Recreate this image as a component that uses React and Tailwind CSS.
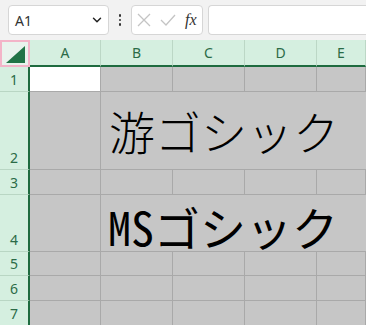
import React from 'react';
import { ChevronDown } from 'lucide-react';

const cols = [
  { id: 'A', w: 'w-[71px]' },
  { id: 'B', w: 'w-[72px]' },
  { id: 'C', w: 'w-[72px]' },
  { id: 'D', w: 'w-[72px]' },
  { id: 'E', w: 'flex-1' },
];

const rows = [
  { n: 1, h: 'h-[25px]' },
  { n: 2, h: 'h-[78px]', text: 'yu' },
  { n: 3, h: 'h-[25px]' },
  { n: 4, h: 'h-[57px]', text: 'ms' },
  { n: 5, h: 'h-[24px]' },
  { n: 6, h: 'h-[25px]' },
  { n: 7, h: 'h-[25px]' },
];

function RowHead({ n, h }) {
  return (
    <div className={`${h} w-[30px] shrink-0 bg-[#d5efe0] border-r-2 border-r-[#1e6b3f] border-b border-b-[#b9d6c4] flex items-end justify-center pb-[1px] text-[14px] leading-[20px] text-[#2b6b47]`}>
      {n}
    </div>
  );
}

function SpillText({ kind }) {
  if (kind === 'yu') {
    return (
      <div className="pl-[8px] pt-[12px] whitespace-nowrap text-[46px] leading-[52px] font-light text-black" style={{ fontFamily: '"Noto Sans CJK JP", sans-serif' }}>
        游ゴシック
      </div>
    );
  }
  return (
    <div className="pl-[7px] pt-[5px] whitespace-nowrap text-[46px] leading-[52px] font-medium text-black" style={{ fontFamily: '"Noto Sans Mono CJK JP", "Noto Sans CJK JP", monospace' }}>
      MSゴシック
    </div>
  );
}

export default function App() {
  return (
    <div className="w-[366px] h-[325px] overflow-hidden bg-[#c6c6c6]" style={{ fontFamily: '"Noto Sans", sans-serif' }}>
      {/* formula bar */}
      <div className="h-[40px] bg-[#f2f2f2] flex items-center pl-[8px]">
        <div className="w-[101px] h-[30px] bg-white border border-[#d6d6d6] rounded-[4px] flex items-center justify-between pl-[6px] pr-[4px]">
          <span className="text-[14px] text-[#333]">A1</span>
          <ChevronDown className="w-[14px] h-[14px] text-[#222]" strokeWidth={2.5} />
        </div>
        <div className="w-[22px] flex flex-col items-center gap-[2px]">
          <span className="w-[2.5px] h-[2.5px] bg-[#333] rounded-full" />
          <span className="w-[2.5px] h-[2.5px] bg-[#333] rounded-full" />
          <span className="w-[2.5px] h-[2.5px] bg-[#333] rounded-full" />
        </div>
        <div className="w-[72px] h-[30px] bg-white border border-[#d6d6d6] rounded-[4px] flex items-center pl-[5px] gap-[9px]">
          <svg width="14" height="14" viewBox="0 0 14 14" className="text-[#c4c4c4]">
            <path d="M1 1 L13 13 M13 1 L1 13" stroke="currentColor" strokeWidth="1.3" fill="none" />
          </svg>
          <svg width="16" height="14" viewBox="0 0 16 14" className="text-[#c4c4c4]">
            <path d="M1 7 L6 12 L15 2" stroke="currentColor" strokeWidth="1.3" fill="none" />
          </svg>
          <span className="text-[16px] italic text-[#333] leading-none" style={{ fontFamily: '"Liberation Serif", serif' }}>fx</span>
        </div>
        <div className="ml-[5px] flex-1 h-[30px] bg-white border border-[#d6d6d6] border-r-0 rounded-l-[4px]" />
      </div>

      {/* column headers */}
      <div className="flex h-[27px] bg-[#d5efe0]">
        <div className="w-[30px] h-[27px] shrink-0 border-2 border-[#f3b4c8] bg-[#e9f3ed] flex items-end justify-end pr-[3px] pb-[2px]">
          <svg width="19" height="17" viewBox="0 0 19 17">
            <path d="M0 17 L19 0 L19 17 Z" fill="#217346" />
          </svg>
        </div>
        {cols.map(c => (
          <div key={c.id} className={`${c.w} h-[27px] border-r border-r-[#bcd7c6] border-b-2 border-b-[#1e6b3f] flex items-center justify-center text-[14px] text-[#2b6b47]`}>
            {c.id}
          </div>
        ))}
      </div>

      {/* rows */}
      {rows.map(r => (
        <div key={r.n} className="flex">
          <RowHead n={r.n} h={r.h} />
          <div className={`${r.h} w-[71px] shrink-0 border-r border-b border-[#a9a9a9] ${r.n === 1 ? 'bg-white' : 'bg-[#c6c6c6]'}`} />
          {r.text ? (
            <div className={`${r.h} flex-1 border-b border-[#a9a9a9] bg-[#c6c6c6]`}>
              <SpillText kind={r.text} />
            </div>
          ) : (
            cols.slice(1).map(c => (
              <div key={c.id} className={`${r.h} ${c.w} border-r border-b border-[#a9a9a9] bg-[#c6c6c6]`} />
            ))
          )}
        </div>
      ))}
    </div>
  );
}
